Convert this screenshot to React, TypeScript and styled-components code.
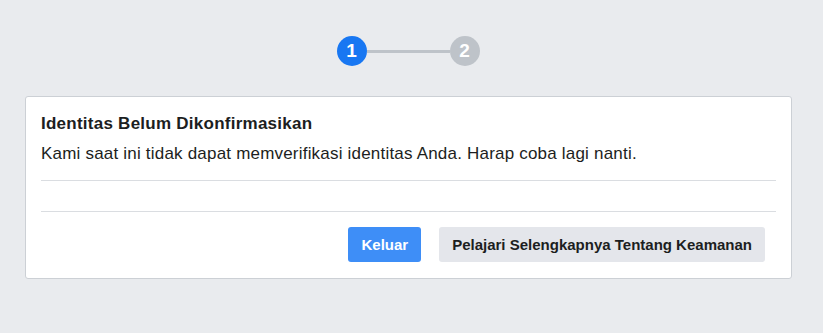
import React from "react";
import styled, { createGlobalStyle } from "styled-components";

const Global = createGlobalStyle`
  html, body { margin: 0; padding: 0; background: #e9ebee; }
  body { font-family: "Liberation Sans", Arial, sans-serif; }
`;

const Page = styled.div`
  width: 823px;
  height: 333px;
  background: #e9ebee;
  display: flex;
  flex-direction: column;
  align-items: center;
  padding-top: 36px;
  box-sizing: border-box;
`;

const Stepper = styled.div`
  display: flex;
  align-items: center;
  margin-left: -7px;
`;

const Step = styled.div<{ $active?: boolean }>`
  width: 30px;
  height: 30px;
  border-radius: 50%;
  background: ${(p) => (p.$active ? "#1877f2" : "#bec3c9")};
  color: #fff;
  font-weight: bold;
  font-size: 19px;
  display: flex;
  align-items: center;
  justify-content: center;
`;

const StepLine = styled.div`
  width: 83px;
  height: 3px;
  background: #bec3c9;
`;

const Card = styled.div`
  margin-top: 30px;
  width: 767px;
  box-sizing: border-box;
  background: #fff;
  border: 1px solid #ccd0d5;
  border-radius: 3px;
  padding: 17px 15px 16px 15px;
  align-self: flex-start;
  margin-left: 25px;
`;

const Title = styled.div`
  font-size: 17px;
  letter-spacing: 0.25px;
  font-weight: bold;
  line-height: 20px;
  color: #1c1e21;
`;

const Body = styled.div`
  font-size: 17px;
  letter-spacing: 0.2px;
  line-height: 20px;
  margin-top: 10px;
  color: #1c1e21;
`;

const Divider = styled.div<{ $mt: number }>`
  height: 1px;
  background: #dadde1;
  margin-top: ${(p) => p.$mt}px;
`;

const Actions = styled.div`
  display: flex;
  justify-content: flex-end;
  gap: 18px;
  margin-top: 15px;
  padding-right: 11px;
`;

const Button = styled.button<{ $primary?: boolean }>`
  height: 35px;
  border: none;
  border-radius: 3px;
  padding: 0 13px;
  font-family: "Liberation Sans", Arial, sans-serif;
  font-size: 15px;
  font-weight: bold;
  background: ${(p) => (p.$primary ? "#3e8ef7" : "#e4e6eb")};
  color: ${(p) => (p.$primary ? "#fff" : "#1c1e21")};
  cursor: pointer;
`;

export default function App() {
  return (
    <>
      <Global />
      <Page>
        <Stepper>
          <Step $active>1</Step>
          <StepLine />
          <Step>2</Step>
        </Stepper>
        <Card>
          <Title>Identitas Belum Dikonfirmasikan</Title>
          <Body>Kami saat ini tidak dapat memverifikasi identitas Anda. Harap coba lagi nanti.</Body>
          <Divider $mt={16} />
          <Divider $mt={30} />
          <Actions>
            <Button $primary>Keluar</Button>
            <Button>Pelajari Selengkapnya Tentang Keamanan</Button>
          </Actions>
        </Card>
      </Page>
    </>
  );
}
